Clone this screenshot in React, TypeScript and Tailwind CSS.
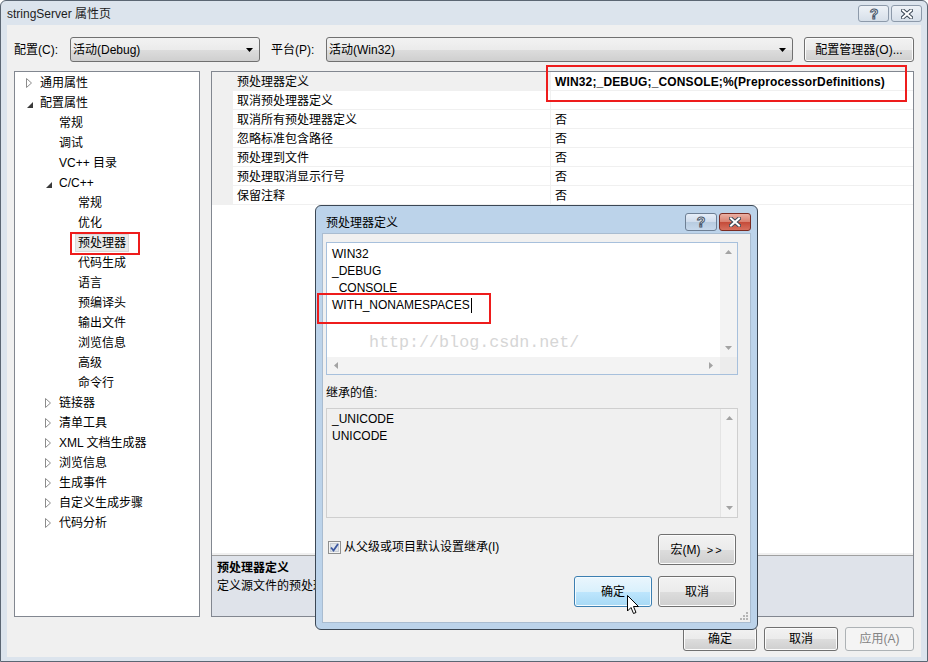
import React from 'react';

const FONT = "font-['Liberation_Sans','Noto_Sans_CJK_SC',sans-serif]";

function Collapsed() {
  return (
    <svg width="7" height="10" viewBox="0 0 7 10">
      <path d="M0.5 0.5 L5.5 5 L0.5 9.5 Z" fill="#ffffff" stroke="#8c8c8c" />
    </svg>
  );
}

function Expanded() {
  return (
    <svg width="6" height="6" viewBox="0 0 6 6">
      <path d="M6 0 L6 6 L0 6 Z" fill="#3a3a3a" />
    </svg>
  );
}

function SArrow({ dir }: { dir: 'up' | 'down' | 'left' | 'right' }) {
  const v = dir === 'up' || dir === 'down';
  const d =
    dir === 'up'
      ? 'M0 4 L3.5 0 L7 4 Z'
      : dir === 'down'
      ? 'M0 0 L7 0 L3.5 4 Z'
      : dir === 'left'
      ? 'M4 0 L4 7 L0 3.5 Z'
      : 'M0 0 L0 7 L4 3.5 Z';
  return (
    <svg width={v ? 7 : 4} height={v ? 4 : 7} viewBox={v ? '0 0 7 4' : '0 0 4 7'}>
      <path d={d} fill="#a3a3a3" />
    </svg>
  );
}

function DropArrow() {
  return (
    <svg width="7" height="4" viewBox="0 0 7 4">
      <path d="M0 0 L7 0 L3.5 4 Z" fill="#000000" />
    </svg>
  );
}

function XGlyph({ w = 12, h = 10 }: { w?: number; h?: number }) {
  return (
    <svg width={w} height={h} viewBox="0 0 12 10">
      <path d="M2 1.5 L10 8.5 M10 1.5 L2 8.5" stroke="#3d4a58" strokeWidth="4" strokeLinecap="square" />
      <path d="M2 1.5 L10 8.5 M10 1.5 L2 8.5" stroke="#ffffff" strokeWidth="2" strokeLinecap="square" />
    </svg>
  );
}

function QGlyph() {
  return (
    <svg width="12" height="14" viewBox="0 0 12 14">
      <text
        x="6"
        y="12"
        textAnchor="middle"
        fontFamily="Liberation Sans, sans-serif"
        fontWeight="bold"
        fontSize="14"
        fill="#ffffff"
        stroke="#47566a"
        strokeWidth="1"
      >
        ?
      </text>
    </svg>
  );
}

type TreeItem = { t: string; lvl: number; arrow?: 'open' | 'closed'; sel?: boolean };

const tree: TreeItem[] = [
  { t: '通用属性', lvl: 0, arrow: 'closed' },
  { t: '配置属性', lvl: 0, arrow: 'open' },
  { t: '常规', lvl: 1 },
  { t: '调试', lvl: 1 },
  { t: 'VC++ 目录', lvl: 1 },
  { t: 'C/C++', lvl: 1, arrow: 'open' },
  { t: '常规', lvl: 2 },
  { t: '优化', lvl: 2 },
  { t: '预处理器', lvl: 2, sel: true },
  { t: '代码生成', lvl: 2 },
  { t: '语言', lvl: 2 },
  { t: '预编译头', lvl: 2 },
  { t: '输出文件', lvl: 2 },
  { t: '浏览信息', lvl: 2 },
  { t: '高级', lvl: 2 },
  { t: '命令行', lvl: 2 },
  { t: '链接器', lvl: 1, arrow: 'closed' },
  { t: '清单工具', lvl: 1, arrow: 'closed' },
  { t: 'XML 文档生成器', lvl: 1, arrow: 'closed' },
  { t: '浏览信息', lvl: 1, arrow: 'closed' },
  { t: '生成事件', lvl: 1, arrow: 'closed' },
  { t: '自定义生成步骤', lvl: 1, arrow: 'closed' },
  { t: '代码分析', lvl: 1, arrow: 'closed' },
];

const props = [
  { n: '预处理器定义', v: 'WIN32;_DEBUG;_CONSOLE;%(PreprocessorDefinitions)', sel: true },
  { n: '取消预处理器定义', v: '' },
  { n: '取消所有预处理器定义', v: '否' },
  { n: '忽略标准包含路径', v: '否' },
  { n: '预处理到文件', v: '否' },
  { n: '预处理取消显示行号', v: '否' },
  { n: '保留注释', v: '否' },
];

function TreeRow({ it }: { it: TreeItem }) {
  const pl = it.lvl === 0 ? 'pl-[11px]' : it.lvl === 1 ? 'pl-[30px]' : 'pl-[49px]';
  return (
    <div className={`flex h-[20px] items-center ${pl}`}>
      <div className="flex w-[14px] items-center">
        {it.arrow === 'closed' && <Collapsed />}
        {it.arrow === 'open' && (
          <div className="mt-[3px] ml-[1px]">
            <Expanded />
          </div>
        )}
      </div>
      {it.sel ? (
        <span className="relative -ml-[3px] h-[18px] border border-[#d9d9d9] bg-[#e9e9e9] px-[2px] leading-[16px]">
          {it.t}
        </span>
      ) : (
        <span className="leading-[16px] whitespace-nowrap">{it.t}</span>
      )}
    </div>
  );
}

const btnGray =
  'flex items-center justify-center rounded-[3px] border border-[#707070] bg-[linear-gradient(#f2f2f2_0%,#ebebeb_50%,#dddddd_50%,#cfcfcf_100%)] shadow-[inset_0_0_0_1px_#fcfcfc]';

export default function App() {
  return (
    <div
      className={`${FONT} relative flex h-[662px] w-[928px] flex-col overflow-hidden rounded-t-[6px] border border-[#5b6673] bg-[#dce4ed] text-[12px] text-black`}
    >
      {/* title bar */}
      <div className="flex h-[24px] items-start">
        <span className="mt-[5px] ml-[6px] leading-[16px] text-[#1c1c1c]">stringServer 属性页</span>
        <div className="mt-[4px] mr-[5px] ml-auto flex gap-[2px]">
          <div className="flex h-[17px] w-[31px] items-center justify-center rounded-[3px] border border-[#8d9aaa] bg-[linear-gradient(#eef2f7,#d6dfe9)]">
            <QGlyph />
          </div>
          <div className="flex h-[17px] w-[31px] items-center justify-center rounded-[3px] border border-[#8d9aaa] bg-[linear-gradient(#eef2f7,#d6dfe9)]">
            <XGlyph />
          </div>
        </div>
      </div>

      {/* client */}
      <div className="mx-[6px] mb-[4px] flex flex-1 flex-col bg-[#f0f0f0] px-[7px] pt-[12px]">
        {/* top row */}
        <div className="flex h-[25px] items-center">
          <span className="w-[56px] leading-[16px]">配置(C):</span>
          <div className="flex h-[25px] w-[190px] items-center rounded-[3px] border border-[#707070] bg-[linear-gradient(#f2f2f2_0%,#ebebeb_50%,#dddddd_50%,#cfcfcf_100%)] pr-[6px] pl-[2px]">
            <span className="leading-[16px]">活动(Debug)</span>
            <div className="ml-auto">
              <DropArrow />
            </div>
          </div>
          <span className="ml-[11px] w-[55px] leading-[16px]">平台(P):</span>
          <div className="flex h-[25px] w-[467px] items-center rounded-[3px] border border-[#707070] bg-[linear-gradient(#f2f2f2_0%,#ebebeb_50%,#dddddd_50%,#cfcfcf_100%)] pr-[6px] pl-[2px]">
            <span className="leading-[16px]">活动(Win32)</span>
            <div className="ml-auto">
              <DropArrow />
            </div>
          </div>
          <div className={`ml-[11px] h-[25px] w-[110px] ${btnGray}`}>
            <span className="leading-[16px]">配置管理器(O)...</span>
          </div>
        </div>

        {/* panels */}
        <div className="mt-[9px] flex h-[546px] gap-[11px]">
          <div className="w-[186px] border border-[#828790] bg-white pt-[1px]">
            {tree.map((it, i) => (
              <TreeRow key={i} it={it} />
            ))}
          </div>
          <div className="flex flex-1 flex-col border border-[#828790] bg-white">
            <div className="flex-1">
              {props.map((p, i) => (
                <div key={i} className="flex h-[19px] border-b border-[#f0f0f0]">
                  <div className="w-[21px] bg-[#f0f0f0]" />
                  <div
                    className={`w-[318px] border-r border-[#f0f0f0] pt-[1px] pl-[4px] leading-[18px] whitespace-nowrap ${
                      p.sel ? 'bg-[#f0f0f0]' : ''
                    }`}
                  >
                    {p.n}
                  </div>
                  <div
                    className={`flex-1 pt-[1px] pl-[4px] leading-[18px] whitespace-nowrap ${
                      p.sel ? 'font-bold tracking-[0.15px]' : ''
                    }`}
                  >
                    {p.v}
                  </div>
                </div>
              ))}
            </div>
            <div className="h-[2px] bg-[#f0f0f0]" />
            <div className="h-[61px] border-t border-[#a0a0a0] bg-[#dfe3ea] pt-[3px] pl-[5px]">
              <div className="leading-[18px] font-bold">预处理器定义</div>
              <div className="leading-[18px]">定义源文件的预处理器符号。</div>
            </div>
          </div>
        </div>

        {/* bottom buttons */}
        <div className="mt-[10px] flex justify-end gap-[7px]">
          <div className={`h-[24px] w-[74px] ${btnGray}`}>
            <span className="leading-[16px]">确定</span>
          </div>
          <div className={`h-[24px] w-[74px] ${btnGray}`}>
            <span className="leading-[16px]">取消</span>
          </div>
          <div className="flex h-[24px] w-[69px] items-center justify-center rounded-[3px] border border-[#adb2b5] bg-[#f4f4f4]">
            <span className="leading-[16px] text-[#838383]">应用(A)</span>
          </div>
        </div>
      </div>

      {/* red box around grid value */}
      <div className="absolute top-[64px] left-[545px] h-[37px] w-[361px] border-2 border-[#ee1c1c]" />
      {/* red box around tree item */}
      <div className="absolute top-[231px] left-[69px] h-[23px] w-[70px] border-2 border-[#ee1c1c]" />

      {/* Dialog */}
      <div className="absolute top-[204px] left-[314px] flex h-[425px] w-[443px] flex-col rounded-[6px] border border-[#3b4754] bg-[#bcd3ea]">
        <div className="flex h-[27px] items-start">
          <span className="mt-[9px] ml-[10px] leading-[16px]">预处理器定义</span>
          <div className="mt-[7px] mr-[6px] ml-auto flex gap-[2px]">
            <div className="flex h-[18px] w-[32px] items-center justify-center rounded-[3px] border border-[#6d7f94] bg-[linear-gradient(#e6eef8_0%,#cfdcec_50%,#b7cbe0_50%,#c6d8ec_100%)]">
              <QGlyph />
            </div>
            <div className="flex h-[18px] w-[32px] items-center justify-center rounded-[3px] border border-[#7a2b22] bg-[linear-gradient(#eab0a4_0%,#d9806f_50%,#c44a38_50%,#d7705e_100%)]">
              <XGlyph />
            </div>
          </div>
        </div>
        <div className="relative mx-[6px] mb-[6px] flex flex-1 flex-col border border-[#a9bcd0] bg-[#f0f0f0] pt-[8px] pr-[12px] pl-[3px]">
          {/* edit 1 */}
          <div className="relative flex h-[133px] flex-col border border-[#a7c0dc] bg-white">
            <div className="flex flex-1">
              <div className="flex-1 pt-[3px] pl-[5px]">
                <div className="leading-[17px]">WIN32</div>
                <div className="leading-[17px]">_DEBUG</div>
                <div className="leading-[17px]">_CONSOLE</div>
                <div className="flex items-center leading-[17px]">
                  WITH_NONAMESPACES
                  <span className="ml-[1px] inline-block h-[15px] w-[1px] bg-black" />
                </div>
              </div>
              <div className="flex w-[17px] flex-col items-center justify-between bg-[#f3f3f3] py-[7px]">
                <SArrow dir="up" />
                <SArrow dir="down" />
              </div>
            </div>
            <div className="flex h-[17px]">
              <div className="flex flex-1 items-center justify-between bg-[#f3f3f3] px-[7px]">
                <SArrow dir="left" />
                <SArrow dir="right" />
              </div>
              <div className="w-[17px] bg-[#ececec]" />
            </div>
            <div className="absolute top-[90px] left-[42px] font-['Liberation_Mono',monospace] text-[16.7px] leading-[20px] text-[#d6d6d6]">
              http://blog.csdn.net/
            </div>
          </div>

          <div className="mt-[10px] leading-[16px]">继承的值:</div>

          {/* edit 2 */}
          <div className="mt-[7px] flex h-[110px] border border-[#cfcfcf] bg-[#f0f0f0]">
            <div className="flex-1 pt-[2px] pl-[5px]">
              <div className="leading-[17px]">_UNICODE</div>
              <div className="leading-[17px]">UNICODE</div>
            </div>
            <div className="flex w-[17px] flex-col items-center justify-between border-l border-[#e4e4e4] bg-[#f4f4f4] py-[7px]">
              <SArrow dir="up" />
              <SArrow dir="down" />
            </div>
          </div>

          {/* checkbox row */}
          <div className="mt-[16px] flex h-[31px]">
            <div className="mt-[5px] ml-[2px] flex h-[16px] items-center gap-[3px]">
              <svg width="13" height="13" viewBox="0 0 13 13">
                <rect x="0.5" y="0.5" width="12" height="12" fill="#f4f4f4" stroke="#8e8f8f" />
                <rect x="2.5" y="2.5" width="8" height="8" fill="#dfe4ea" stroke="#c9cfd6" />
                <path d="M3 6.5 L5.5 9.5 L10 3" stroke="#3b57a0" strokeWidth="1.8" fill="none" />
              </svg>
              <span className="leading-[16px]">从父级或项目默认设置继承(I)</span>
            </div>
            <div className={`mr-[2px] ml-auto h-[31px] w-[78px] ${btnGray}`}>
              <span className="leading-[16px]">
                宏(M) <span className="ml-[3px] text-[11px] tracking-[2px]">&gt;&gt;</span>
              </span>
            </div>
          </div>

          {/* ok/cancel */}
          <div className="mt-[11px] mr-[2px] flex justify-end gap-[6px]">
            <div className="flex h-[31px] w-[78px] items-center justify-center rounded-[3px] border border-[#3c7fb1] bg-[linear-gradient(#eaf6fd_0%,#d9f0fc_50%,#bee6fd_50%,#a7d9f5_100%)] shadow-[inset_0_0_0_1px_#f4fbff]">
              <span className="leading-[16px]">确定</span>
            </div>
            <div className={`h-[31px] w-[78px] ${btnGray}`}>
              <span className="leading-[16px]">取消</span>
            </div>
          </div>

          {/* resize grip */}
          <svg className="absolute right-[1px] bottom-[1px]" width="10" height="10" viewBox="0 0 10 10">
            <rect x="7" y="1" width="2" height="2" fill="#b5b5b5" />
            <rect x="4" y="4" width="2" height="2" fill="#b5b5b5" />
            <rect x="7" y="4" width="2" height="2" fill="#b5b5b5" />
            <rect x="1" y="7" width="2" height="2" fill="#b5b5b5" />
            <rect x="4" y="7" width="2" height="2" fill="#b5b5b5" />
            <rect x="7" y="7" width="2" height="2" fill="#b5b5b5" />
          </svg>
        </div>
      </div>

      {/* red box in dialog */}
      <div className="absolute top-[292px] left-[316px] h-[31px] w-[174px] border-2 border-[#ee1c1c]" />

      {/* mouse cursor */}
      <svg className="absolute top-[594px] left-[626px]" width="13" height="20" viewBox="0 0 13 20">
        <path
          d="M0.5 0.5 L0.5 16 L4 12.5 L6.5 18.5 L9 17.5 L6.5 11.5 L11.5 11.5 Z"
          fill="#ffffff"
          stroke="#000000"
          strokeWidth="1"
          strokeLinejoin="miter"
        />
      </svg>
    </div>
  );
}
